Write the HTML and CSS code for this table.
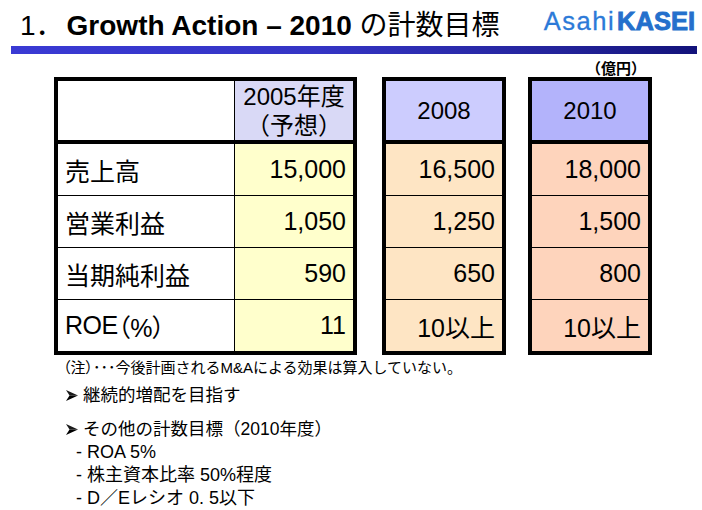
FILE: index.html
```html
<!DOCTYPE html>
<html lang="ja">
<head>
<meta charset="utf-8">
<title>Growth Action – 2010 の計数目標</title>
<link rel="stylesheet" href="styles.css">
</head>
<body>
<div class="header">
  <h1 class="title"><span class="num">1．</span><span class="en">Growth Action – 2010 </span><span class="jp">の計数目標</span></h1>
  <div class="logo"><span class="asahi">Asahi</span><span class="kasei">KASEI</span></div>
</div>
<div class="bar"></div>
<div class="unit">（億円）</div>
<div class="tables">
  <div class="tbl t1">
    <div class="cell head label"></div>
    <div class="cell head h2005"><div>2005年度<br>（予想）</div></div>
    <div class="cell label">売上高</div>
    <div class="cell val c2005">15,000</div>
    <div class="cell label">営業利益</div>
    <div class="cell val c2005">1,050</div>
    <div class="cell label">当期純利益</div>
    <div class="cell val c2005">590</div>
    <div class="cell label last"><span class="roe">ROE</span><span class="palt">（%）</span></div>
    <div class="cell val c2005 last">11</div>
  </div>
  <div class="tbl t2">
    <div class="cell head h2008">2008</div>
    <div class="cell val c2008">16,500</div>
    <div class="cell val c2008">1,250</div>
    <div class="cell val c2008">650</div>
    <div class="cell val c2008 last">10以上</div>
  </div>
  <div class="tbl t3">
    <div class="cell head h2010">2010</div>
    <div class="cell val c2010">18,000</div>
    <div class="cell val c2010">1,500</div>
    <div class="cell val c2010">800</div>
    <div class="cell val c2010 last">10以上</div>
  </div>
</div>
<div class="notes">
  <div class="note"><span class="palt">（注）</span>･･･今後計画されるM&amp;Aによる効果は算入していない。</div>
  <div class="bullet b1"><svg class="arrow" width="12" height="11" viewBox="0 0 12 11"><polygon points="0,0 12,5.5 3.5,5.5" fill="#1a1a1a"/><polygon points="3.5,5.5 12,5.5 0,11" fill="#000"/></svg><span>継続的増配を目指す</span></div>
  <div class="bullet b2"><svg class="arrow" width="12" height="11" viewBox="0 0 12 11"><polygon points="0,0 12,5.5 3.5,5.5" fill="#1a1a1a"/><polygon points="3.5,5.5 12,5.5 0,11" fill="#000"/></svg><span>その他の計数目標（2010年度）</span></div>
  <div class="sub">- ROA 5%</div>
  <div class="sub">- 株主資本比率 50%程度</div>
  <div class="sub">- D／Eレシオ 0. 5以下</div>
</div>
</body>
</html>
```

FILE: styles.css
```css
html, body {
  margin: 0;
  padding: 0;
}
body {
  width: 702px;
  height: 510px;
  overflow: hidden;
  background: #fff;
  color: #000;
  font-family: "Liberation Sans", "Noto Sans CJK JP", sans-serif;
}

.header {
  display: flex;
  justify-content: space-between;
  height: 46px;
}
.title {
  margin: 0;
  padding: 11px 0 0 20px;
  font-size: 28px;
  line-height: 30px;
  font-weight: bold;
  white-space: nowrap;
}
.title .num {
  font-weight: normal;
  margin-right: 3px;
}
.title .jp {
  font-weight: normal;
}
.logo {
  padding: 7px 7px 0 0;
  font-size: 25.5px;
  line-height: 28px;
  white-space: nowrap;
  color: #2c7ad8;
}
.logo .asahi {
  letter-spacing: 1.5px;
  margin-right: 2px;
  -webkit-text-stroke: 0.3px #2c7ad8;
}
.logo .kasei {
  font-weight: bold;
  -webkit-text-stroke: 0.9px #2470cc;
  color: #2470cc;
}

.bar {
  height: 8px;
  margin: 0 5px 0 11px;
  background: linear-gradient(90deg, #3a3ad4 0%, #3434c4 45%, #23239a 80%, #12127a 100%);
}

.unit {
  height: 23px;
  box-sizing: border-box;
  padding: 6px 56px 0 0;
  text-align: right;
  font-size: 15px;
  line-height: 17px;
  font-weight: bold;
}

.tables {
  display: flex;
  padding-left: 54px;
}
.tbl {
  display: grid;
  box-sizing: border-box;
  border: 4px solid #000;
}
.t1 {
  width: 303px;
  grid-template-columns: 177px 1fr;
}
.t2 {
  width: 124px;
  margin-left: 25px;
}
.t3 {
  width: 124px;
  margin-left: 22px;
}

.cell {
  height: 51px;
  border-bottom: 1px solid #000;
  font-size: 25px;
  display: flex;
  align-items: center;
  padding: 0 7px;
  white-space: nowrap;
}
.cell.head {
  height: 59px;
  border-bottom: 4px solid #000;
  font-size: 24px;
  line-height: 29px;
  justify-content: center;
  text-align: center;
}
.cell.last {
  border-bottom: 0;
}
.label {
  border-right: 1px solid #000;
  background: #fff;
}
.val {
  justify-content: flex-end;
}
.roe {
  letter-spacing: -0.5px;
}
.palt {
  font-feature-settings: "palt";
}

.h2005 { background: #d9d9f6; }
.h2008 { background: #ccccfe; }
.h2010 { background: #b3b3fb; }
.c2005 { background: #ffffcc; }
.c2008 { background: #fee5c4; }
.c2010 { background: #fed4bc; }

.notes {
  padding-left: 63px;
}
.note {
  margin-top: 3px;
  font-size: 15px;
  line-height: 20px;
  white-space: nowrap;
}
.bullet {
  display: flex;
  align-items: center;
  gap: 5px;
  font-size: 17.5px;
  line-height: 24px;
}
.bullet .arrow {
  margin-left: 3px;
  flex: none;
}
.b1 {
  margin-top: 5px;
}
.b2 {
  margin-top: 10px;
}
.sub {
  padding-left: 13px;
  font-size: 18px;
  line-height: 23px;
  white-space: nowrap;
}
```
